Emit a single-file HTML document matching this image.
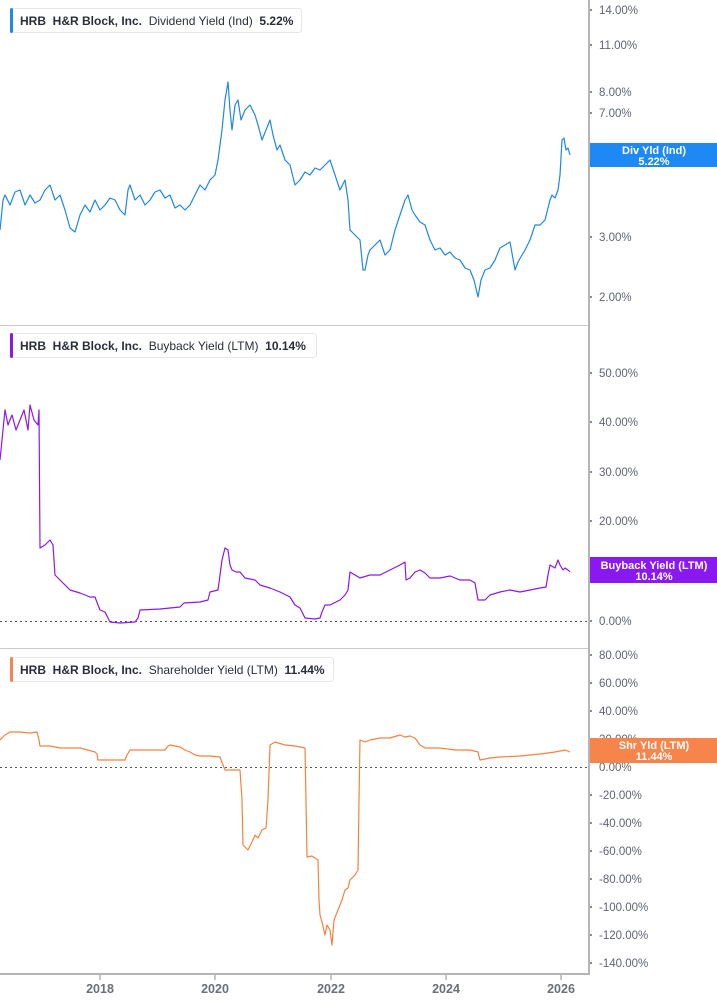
<!DOCTYPE html>
<html><head><meta charset="utf-8"><style>
html,body{margin:0;padding:0;background:#fff;width:717px;height:1005px;overflow:hidden}
svg{display:block;font-family:"Liberation Sans",sans-serif}
.ax{font-size:11.5px;fill:#5f6470}
.lg{font-size:12px;font-weight:bold;fill:#2a2e39}
.lb{font-size:11px;font-weight:bold;fill:#fff}
.yr{font-size:12.5px;font-weight:bold;fill:#6b6f78}
</style></head><body>
<svg width="717" height="1005" viewBox="0 0 717 1005">
<!-- separators -->
<line x1="0" y1="325.5" x2="589" y2="325.5" stroke="#c8c8c8"/>
<line x1="0" y1="648.5" x2="589" y2="648.5" stroke="#c8c8c8"/>
<line x1="0" y1="974" x2="590" y2="974" stroke="#b5b5b5" stroke-width="2"/>
<line x1="589" y1="0" x2="589" y2="975" stroke="#b5b5b5" stroke-width="2"/>
<!-- zero dotted lines -->
<line x1="0" y1="621.5" x2="589" y2="621.5" stroke="#555" stroke-dasharray="2,3"/>
<line x1="0" y1="767.5" x2="589" y2="767.5" stroke="#555" stroke-dasharray="2,3"/>
<!-- x ticks -->
<g stroke="#b5b5b5" stroke-width="1.5"><line x1="100" y1="974" x2="100" y2="980"/><line x1="215" y1="974" x2="215" y2="980"/><line x1="331" y1="974" x2="331" y2="980"/><line x1="446" y1="974" x2="446" y2="980"/><line x1="561" y1="974" x2="561" y2="980"/></g>
<g class="yr" text-anchor="middle"><text x="100" y="993">2018</text><text x="215" y="993">2020</text><text x="331" y="993">2022</text><text x="446" y="993">2024</text><text x="561" y="993">2026</text></g>
<!-- y labels -->
<g class="ax">
<text x="599" y="14">14.00%</text><text x="599" y="49">11.00%</text><text x="599" y="96">8.00%</text><text x="599" y="117">7.00%</text><text x="599" y="241">3.00%</text><text x="599" y="301">2.00%</text>
<text x="599" y="377">50.00%</text><text x="599" y="426">40.00%</text><text x="599" y="476">30.00%</text><text x="599" y="525">20.00%</text><text x="599" y="625">0.00%</text>
<text x="599" y="659">80.00%</text><text x="599" y="687">60.00%</text><text x="599" y="715">40.00%</text><text x="599" y="743">20.00%</text><text x="599" y="771">0.00%</text><text x="599" y="799">-20.00%</text><text x="599" y="827">-40.00%</text><text x="599" y="855">-60.00%</text><text x="599" y="883">-80.00%</text><text x="599" y="911">-100.00%</text><text x="599" y="939">-120.00%</text><text x="599" y="967">-140.00%</text>
</g>
<g fill="#666"><circle cx="591" cy="10" r="1"/><circle cx="591" cy="45" r="1"/><circle cx="591" cy="92" r="1"/><circle cx="591" cy="113" r="1"/><circle cx="591" cy="237" r="1"/><circle cx="591" cy="297" r="1"/><circle cx="591" cy="373" r="1"/><circle cx="591" cy="422" r="1"/><circle cx="591" cy="472" r="1"/><circle cx="591" cy="521" r="1"/><circle cx="591" cy="621" r="1"/><circle cx="591" cy="655" r="1"/><circle cx="591" cy="683" r="1"/><circle cx="591" cy="711" r="1"/><circle cx="591" cy="795" r="1"/><circle cx="591" cy="823" r="1"/><circle cx="591" cy="851" r="1"/><circle cx="591" cy="879" r="1"/><circle cx="591" cy="907" r="1"/><circle cx="591" cy="935" r="1"/><circle cx="591" cy="963" r="1"/></g>
<!-- series -->
<polyline fill="none" stroke="#1e88e5" stroke-width="1.2" stroke-linejoin="round" points="0,230 3,200 5,195 10,205 15,192 20,190 25,205 30,195 35,203 40,200 45,190 50,185 55,200 60,195 65,210 70,228 75,232 80,215 85,205 90,212 95,200 100,210 105,205 110,198 115,200 120,210 125,215 128,190 130,185 135,200 140,195 145,205 150,200 155,192 160,190 165,198 170,195 175,208 180,205 185,210 190,205 195,195 200,185 205,190 210,180 215,175 218,160 222,130 225,100 228,82 230,110 232,130 235,105 238,100 241,120 245,110 250,105 255,115 258,125 262,140 266,130 270,120 273,135 277,150 280,145 285,160 290,165 295,185 300,180 305,172 310,175 315,168 320,170 325,165 330,160 335,175 340,190 345,180 348,200 350,230 355,235 360,240 363,270 365,270 368,255 370,250 375,245 380,240 385,255 390,250 395,230 400,215 405,200 408,195 412,210 415,215 420,222 425,225 430,240 435,250 440,248 445,255 450,252 455,258 460,260 465,268 470,270 474,280 478,297 481,280 485,270 490,268 495,260 500,248 505,245 510,242 515,270 518,262 522,255 525,250 530,240 535,225 540,225 545,220 550,200 552,195 555,198 558,190 560,175 562,140 564,138 566,150 568,148 570,155"/>
<polyline fill="none" stroke="#8a18f0" stroke-width="1.2" stroke-linejoin="round" points="0,460 2,440 5,410 8,425 12,415 16,430 20,420 24,410 28,430 30,405 34,420 38,425 39,410 40,548 45,545 50,540 53,545 55,575 60,580 70,590 80,593 90,597 95,597 98,605 100,610 105,612 110,622 120,623 135,622 138,618 140,610 160,609 180,607 184,603 200,602 208,600 210,592 218,590 222,560 225,548 228,550 230,565 232,570 236,572 240,572 245,578 255,580 260,585 270,588 280,592 290,597 295,605 300,608 305,618 315,619 320,618 322,612 325,605 330,605 340,600 345,595 348,590 350,572 360,578 370,575 380,575 390,570 400,565 405,562 406,580 410,578 415,572 420,570 425,573 430,578 440,578 450,576 460,580 470,580 475,583 478,600 485,600 490,595 500,592 510,590 520,592 530,590 540,588 546,587 548,575 550,565 555,568 558,560 560,565 563,570 565,568 568,570 570,572"/>
<polyline fill="none" stroke="#f5823f" stroke-width="1.2" stroke-linejoin="round" points="0,740 5,735 10,732 20,732 30,733 37,732 39,740 40,746 50,746 60,748 80,748 95,752 97,754 98,760 110,760 125,760 127,755 130,750 150,750 165,750 168,746 170,745 180,747 185,750 190,752 195,755 200,756 210,756 220,757 223,765 225,770 235,770 240,770 242,800 243,845 246,848 248,850 252,842 255,835 258,838 262,830 266,828 268,800 270,745 275,742 285,745 295,746 305,748 306,800 307,857 312,856 318,860 319,900 320,915 322,922 325,935 327,925 330,930 332,945 334,920 338,910 342,900 345,890 348,888 350,880 355,875 358,870 359,800 360,740 365,742 370,740 380,738 390,738 400,735 405,737 410,736 415,738 420,745 425,748 440,748 455,750 470,750 478,752 480,760 490,758 500,757 520,756 540,754 555,752 565,750 570,752"/>
<!-- value boxes -->
<rect x="590" y="143" width="127" height="24" fill="#1e88f5"/>
<text class="lb" x="654" y="154" text-anchor="middle">Div Yld (Ind)</text><text class="lb" x="654" y="165" text-anchor="middle">5.22%</text>
<rect x="590" y="557" width="127" height="26" fill="#8a18f0"/>
<text class="lb" x="654" y="569" text-anchor="middle">Buyback Yield (LTM)</text><text class="lb" x="654" y="580" text-anchor="middle">10.14%</text>
<rect x="590" y="738" width="127" height="25" fill="#f7844a"/>
<text class="lb" x="654" y="749" text-anchor="middle">Shr Yld (LTM)</text><text class="lb" x="654" y="760" text-anchor="middle">11.44%</text>
<!-- legends -->
<rect x="10.5" y="8.5" width="291" height="24" rx="3" fill="#fff" stroke="#e6e6e6"/>
<rect x="10" y="8" width="3" height="25" rx="1.5" fill="#1e88f5"/>
<text class="lg" x="20" y="25">HRB&#160;&#160;H&amp;R Block, Inc.&#160;&#160;<tspan font-weight="normal">Dividend Yield (Ind)</tspan>&#160;&#160;5.22%</text>
<rect x="10.5" y="333.5" width="306" height="24" rx="3" fill="#fff" stroke="#e6e6e6"/>
<rect x="10" y="333" width="3" height="25" rx="1.5" fill="#8a18f0"/>
<text class="lg" x="20" y="350">HRB&#160;&#160;H&amp;R Block, Inc.&#160;&#160;<tspan font-weight="normal">Buyback Yield (LTM)</tspan>&#160;&#160;10.14%</text>
<rect x="10.5" y="657.5" width="323" height="24" rx="3" fill="#fff" stroke="#e6e6e6"/>
<rect x="10" y="657" width="3" height="25" rx="1.5" fill="#f7844a"/>
<text class="lg" x="20" y="674">HRB&#160;&#160;H&amp;R Block, Inc.&#160;&#160;<tspan font-weight="normal">Shareholder Yield (LTM)</tspan>&#160;&#160;11.44%</text>
</svg>
</body></html>
